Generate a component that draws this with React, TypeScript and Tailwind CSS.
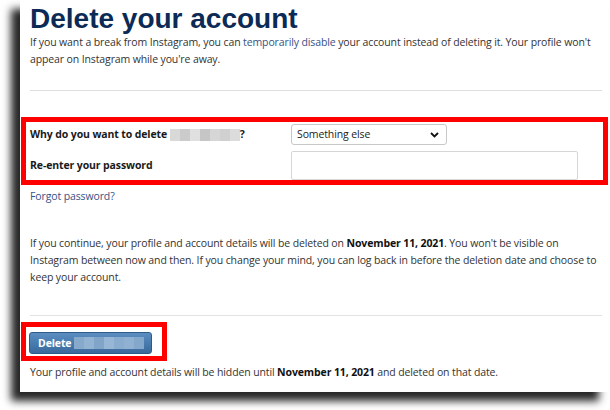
import React from 'react';

const Blur: React.FC<{ tone: 'gray' | 'blue' }> = ({ tone }) => {
  const cells =
    tone === 'gray'
      ? ['#d9d9d9', '#cbcbcb', '#e0e0e0', '#c6c6c6', '#d6d6d6', '#d0d0d0', '#dcdcdc']
      : ['#86a9cc', '#93b3d3', '#80a5c9', '#98b7d6', '#8aadcf', '#90b1d2', '#84a8cb'];
  return (
    <span className="inline-flex h-[12px] align-middle">
      {cells.map((c, i) => (
        <span key={i} className="h-full w-[10px]" style={{ backgroundColor: c }} />
      ))}
    </span>
  );
};

export default function App() {
  return (
    <div className="w-[610px] h-[410px] bg-white overflow-hidden font-['Open_Sans','Noto_Sans',sans-serif]">
      <div className="ml-[20px] w-[588px] h-[392px] bg-white shadow-[-9px_9px_8px_rgba(0,0,0,0.85)] pl-[10px] pr-[6px] text-[10.5px] leading-[17px] tracking-[-0.12px] text-[#333]">
        <h1 className="font-['Liberation_Sans',Arial,sans-serif] font-bold text-[28px] leading-[30px] tracking-normal text-[#0b2b56] pt-[4px]">
          Delete your account
        </h1>

        <p>
          If you want a break from Instagram, you can{' '}
          <span className="text-[#385185]">temporarily disable</span> your account instead of
          deleting it. Your profile won't appear on Instagram while you're away.
        </p>

        <div className="mt-[22px] h-px bg-[#dedede]" />

        <div className="-ml-[9px] -mr-[6px] mt-[26px] border-[5px] border-[#ff0000] pl-[4px] pr-[25px] pt-[2px]">
          <div className="flex items-center h-[21px]">
            <label className="w-[261px] font-bold text-[#1a1a1a] flex items-center">
              Why do you want to delete&nbsp;
              <Blur tone="gray" />?
            </label>
            <div className="w-[156px] h-[21px] border border-[#c8c8c8] rounded-[3px] flex items-center justify-between pl-[5px] pr-[7px] text-[#222]">
              <span>Something else</span>
              <svg width="9" height="6" viewBox="0 0 9 6">
                <path d="M1 1 L4.5 4.5 L8 1" fill="none" stroke="#111" strokeWidth="1.8" />
              </svg>
            </div>
          </div>
          <div className="flex items-center mt-[6px] h-[29px]">
            <label className="w-[261px] font-bold text-[#1a1a1a]">Re-enter your password</label>
            <div className="flex-1 h-[29px] border border-[#d6d6d6] rounded-[2px]" />
          </div>
        </div>

        <div className="mt-[3px] text-[#385185]">Forgot password?</div>

        <p className="mt-[30px]">
          If you continue, your profile and account details will be deleted on{' '}
          <b className="text-[#111]">November 11, 2021</b>. You won't be visible on Instagram between
          now and then. If you change your mind, you can log back in before the deletion date and
          choose to keep your account.
        </p>

        <div className="mt-[29px] h-px bg-[#e3e3e3]" />

        <div className="-ml-[9px] mt-[6px] w-[146px] h-[39px] border-[5px] border-[#ff0000] pl-[3px] pt-[5px]">
          <div className="w-[123px] h-[22px] rounded-[3px] border border-[#2f5b88] bg-gradient-to-b from-[#5b8dc1] to-[#3a6a9c] flex items-center pl-[8px] text-white font-bold">
            Delete
            <span className="ml-[3px] flex">
              <Blur tone="blue" />
            </span>
          </div>
        </div>

        <p className="mt-[3px]">
          Your profile and account details will be hidden until{' '}
          <b className="text-[#111]">November 11, 2021</b> and deleted on that date.
        </p>
      </div>
    </div>
  );
}
